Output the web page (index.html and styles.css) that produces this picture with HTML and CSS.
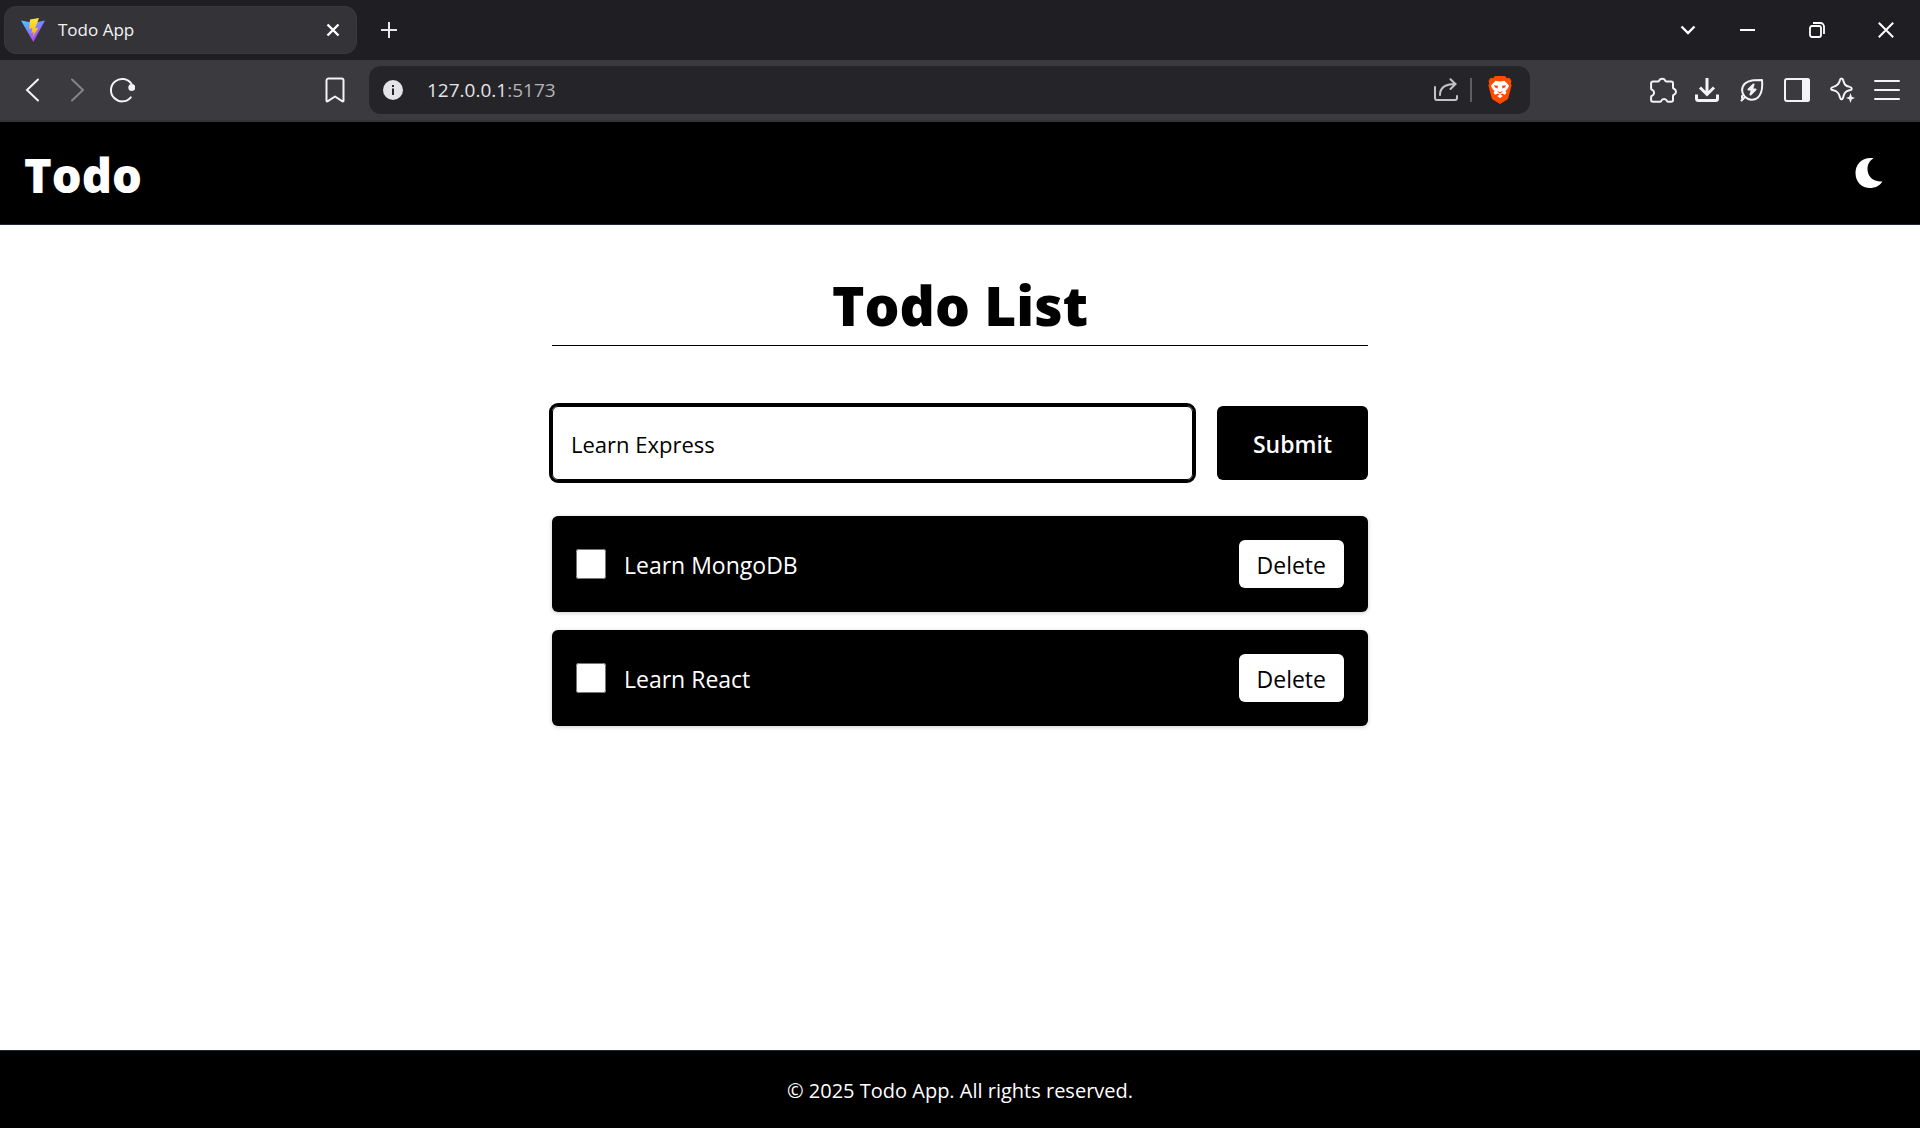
FILE: index.html
```html
<!DOCTYPE html>
<html lang="en">
<head>
<meta charset="utf-8">
<meta name="viewport" content="width=device-width, initial-scale=1">
<title>Todo App</title>
<link rel="stylesheet" href="styles.css">
</head>
<body>
<div class="browser">
  <div class="tab-strip">
    <div class="tab">
      <svg class="tab-logo" width="24" height="24" viewBox="0 0 24 24" aria-hidden="true">
        <defs>
          <linearGradient id="vite-a" x1="0" y1="0" x2="0.6" y2="1"><stop offset="0" stop-color="#41d1ff"/><stop offset="1" stop-color="#bd34fe"/></linearGradient>
          <linearGradient id="vite-b" x1="0" y1="0" x2="0" y2="1"><stop offset="0" stop-color="#ffea3d"/><stop offset="1" stop-color="#ffa800"/></linearGradient>
        </defs>
        <path d="M0 2.6 12.3 24 24 2.6 12.5 4.8Z" fill="url(#vite-a)"/>
        <path d="M18 0 9 1.400 8.200 10.800l3.100-.6-1 4.800 2.600-.7-1.600 5.600 6-10.100-3.200.5Z" fill="url(#vite-b)"/>
      </svg>
      <span class="tab-title">Todo App</span>
      <button class="tab-close" type="button" aria-label="Close tab">
        <svg width="14" height="14" viewBox="0 0 14 14" fill="none" stroke="#fff" stroke-width="2.4"><path d="M1.5 1.5l11 11M12.5 1.5l-11 11"/></svg>
      </button>
    </div>
    <button class="new-tab" type="button" aria-label="New tab">
      <svg width="16" height="16" viewBox="0 0 16 16" fill="none" stroke="#e8e8ea" stroke-width="2"><path d="M8 0v16M0 8h16"/></svg>
    </button>
    <div class="window-controls">
      <button type="button" aria-label="Search tabs"><svg width="16" height="10" viewBox="0 0 16 10" fill="none" stroke="#fff" stroke-width="2.4"><path d="M1.5 1.5 8 8l6.5-6.5"/></svg></button>
      <button type="button" aria-label="Minimize"><svg width="16" height="16" viewBox="0 0 16 16" fill="#fff"><path d="M0 7h15v2H0z"/></svg></button>
      <button type="button" aria-label="Restore"><svg width="16" height="16" viewBox="0 0 16 16" fill="none" stroke="#fff" stroke-width="1.8"><rect x="1" y="4" width="11" height="11" rx="2"/><path d="M4 1h7.500A3.500 3.500 0 0 1 15 4.500V12"/></svg></button>
      <button type="button" aria-label="Close window"><svg width="16" height="16" viewBox="0 0 16 16" fill="none" stroke="#fff" stroke-width="2"><path d="M.8.8l14.400 14.400M15.200.8.8 15.200"/></svg></button>
    </div>
  </div>

  <div class="toolbar">
    <button class="tool" type="button" aria-label="Back"><svg width="24" height="24" viewBox="0 0 24 24" fill="none" stroke="#f4f4f6" stroke-width="2" stroke-linecap="round"><path d="M18 1.500 7 12l11 10.500"/></svg></button>
    <button class="tool" type="button" aria-label="Forward"><svg width="24" height="24" viewBox="0 0 24 24" fill="none" stroke="#858489" stroke-width="2" stroke-linecap="round"><path d="M7 1.500 18 12 7 22.500"/></svg></button>
    <button class="tool" type="button" aria-label="Reload"><svg width="26" height="26" viewBox="0 0 26 26" fill="none" stroke="#f4f4f6" stroke-width="2" stroke-linecap="round"><path d="M21.800 20.300A11.200 11.200 0 1 1 22.500 7"/><circle cx="22.800" cy="10.600" r="2.500" fill="#f4f4f6"/></svg></button>
    <button class="tool bookmark" type="button" aria-label="Bookmark"><svg width="20" height="26" viewBox="0 0 20 26" fill="none" stroke="#f4f4f6" stroke-width="2" stroke-linejoin="round"><path d="M3.500 1.500h13a2 2 0 0 1 2 2v20q0 1.600-1.400.7L10 19.500l-7.100 4.700q-1.400.9-1.400-.7v-20a2 2 0 0 1 2-2Z"/></svg></button>
    <div class="address-bar">
      <svg width="20" height="20" viewBox="0 0 20 20" aria-hidden="true"><circle cx="10" cy="10" r="10" fill="#e4e3e8"/><path d="M9 5h2v2H9zM9 8.500h2V15H9z" fill="#252429"/></svg>
      <span class="address">127.0.0.1<span class="port">:5173</span></span>
      <button class="address-action" type="button" aria-label="Share"><svg width="24" height="24" viewBox="0 0 24 24" fill="none" stroke="#c4c3c8" stroke-width="2" stroke-linecap="round"><path d="M1 9v11a2 2 0 0 0 2 2h18a2 2 0 0 0 2-2v-2M6 17C6 10 10 6 21 6M16.500 1.200 21.500 6l-5 5"/></svg></button>
      <span class="address-divider"></span>
      <button class="address-action" type="button" aria-label="Brave Shields"><svg width="24" height="28" viewBox="0 0 24 28"><path d="M7 0h10l2 2.200 2.500-.4L23.500 5l-.7 2.200.8 2-3.100 12.300q-.5 1.500-2 2.600L12 28l-6.500-3.900q-1.500-1.100-2-2.600L.4 9.200l.8-2L.5 5l2-3.200 2.500.4Z" fill="#ff4b00"/><path d="M7.500 4.800 12 5.600l4.500-.8 4.500 4.600-.7 2-2.600 3.700.7 1.900-1.600 1.700-2.700-1.200-1.600 1 2.200 1.500L12 22.300 9.300 20l2.200-1.500-1.600-1-2.700 1.200L5.600 17l.7-1.900-2.600-3.700-.7-2Z" fill="#fff"/><path d="m6 9.200 4.200.6-.6 1 .4 1.800-3-1ZM18 9.200l-4.200.6.6 1-.4 1.800 3-1ZM9 14.600l2.300 1.300h1.400l2.300-1.300-1.800 2.400-1.200.6-1.200-.6Z" fill="#ff4b00"/></svg></button>
    </div>
    <div class="tools-right">
      <button class="tool" type="button" aria-label="Extensions"><svg width="30" height="26" viewBox="-4 0 30 26" fill="none" stroke="#f4f4f6" stroke-width="2" stroke-linejoin="round"><path d="M2 4.500h5q1 0 1.200-1a3.300 3 0 0 1 6 0q.2 1 1.200 1h4.700q1.900 0 1.900 1.900v4q0 1 .9 1.300a3.200 3.200 0 0 1 0 6q-.9.300-.9 1.300v4q0 1.800-1.900 1.800h-3q-1 0-1.200-1a3 3 0 0 0-5.600 0q-.2 1-1.200 1H2q-1.900 0-1.900-1.800v-3q0-1 .9-1.300a3.200 3.200 0 0 0 0-6q-.9-.3-.9-1.300V6.400Q.1 4.500 2 4.500Z"/></svg></button>
      <button class="tool" type="button" aria-label="Downloads"><svg width="24" height="24" viewBox="0 0 24 24" fill="none" stroke="#f4f4f6" stroke-width="3"><path d="M12 0v16M5 9.500l7 7 7-7M1.500 16.500v4q0 2 2 2h17q2 0 2-2v-4"/></svg></button>
      <button class="tool" type="button" aria-label="Energy saver"><svg width="24" height="24" viewBox="0 0 24 24" fill="none" stroke="#f4f4f6" stroke-width="2" stroke-linejoin="round" stroke-linecap="round"><path d="M22 2c.8 8-.3 14-4.300 17.700-3.700 3-9.700 2.600-12.900-1C1.500 15.500.8 9.500 5 5.500 9 2 14 2 22 2ZM5 19l-3.500 3.500M2 18v2M13.500 6.500l-5 5h7l-5 5M13.500 6.500 12 11.500l-1.500 5"/></svg></button>
      <button class="tool" type="button" aria-label="Side panel"><svg width="26" height="24" viewBox="0 0 26 24" fill="none" stroke="#f4f4f6" stroke-width="2"><rect x="1" y="1" width="24" height="22" rx="2"/><path d="M19 1h4q2 0 2 2v18q0 2-2 2h-4Z" fill="#f4f4f6"/></svg></button>
      <button class="tool" type="button" aria-label="Assistant"><svg width="26" height="26" viewBox="0 0 26 26" fill="none" stroke="#f4f4f6" stroke-width="2" stroke-linejoin="round"><path d="M12.500 1.500c1.200 0 1.500.8 1.700 1.800.9 4 2.100 5.600 6.400 6.600 2.900.7 2.900 2.800 0 3.400-4.300 1-5.500 2.700-6.400 7-.6 2.600-2.700 2.600-3.300 0-.9-4.300-2.300-6-6.500-7-3-.6-3-2.700 0-3.400 4.200-1 5.600-2.600 6.500-6.600.2-1 .4-1.800 1.600-1.800Z"/><path d="m21.500 16 1.300 3.700 3.200 1.300-3.200 1.300-1.300 3.700-1.300-3.700L17 21l3.200-1.300Z" fill="#f4f4f6" stroke="none"/></svg></button>
      <button class="tool" type="button" aria-label="Menu"><svg width="26" height="20" viewBox="0 0 26 20" fill="none" stroke="#f4f4f6" stroke-width="2" stroke-linecap="round"><path d="M1 1h24M1 10h24M1 19h24"/></svg></button>
    </div>
  </div>
</div>

<header class="site-header">
  <div class="brand">Todo</div>
  <button class="theme-toggle" type="button" aria-label="Toggle dark mode">
    <svg width="28" height="30" viewBox="0 0 28 30" fill="#fff"><path d="M18.500.2C6-1 .5 7 .5 15 .5 24 7 30 15 30c5 0 9.500-2 12.500-6.500C18 24 12.500 18.500 12.500 11c0-4.800 2.300-8.600 6-10.800Z"/></svg>
  </button>
</header>

<main class="content">
  <h1 class="title">Todo List</h1>
  <form class="todo-form">
    <input class="todo-input" type="text" value="Learn Express" aria-label="New todo">
    <button class="submit" type="submit">Submit</button>
  </form>
  <ul class="todo-list">
    <li class="todo">
      <input class="todo-check" type="checkbox" id="todo-1">
      <label class="todo-text" for="todo-1">Learn MongoDB</label>
      <button class="delete" type="button">Delete</button>
    </li>
    <li class="todo">
      <input class="todo-check" type="checkbox" id="todo-2">
      <label class="todo-text" for="todo-2">Learn React</label>
      <button class="delete" type="button">Delete</button>
    </li>
  </ul>
</main>

<footer class="site-footer">© 2025 Todo App. All rights reserved.</footer>
</body>
</html>
```
FILE: styles.css
```css
*, *::before, *::after {
  box-sizing: border-box;
}

body {
  margin: 0;
  min-height: 100vh;
  display: flex;
  flex-direction: column;
  background: #fff;
  color: #000;
  font-family: "Open Sans", "Noto Sans", sans-serif;
  font-size: 23px;
  line-height: 36px;
}

button {
  margin: 0;
  padding: 0;
  border: 0;
  background: none;
  color: inherit;
  font: inherit;
  cursor: pointer;
}

svg {
  display: block;
  flex: none;
}

/* Browser frame */
.tab-strip {
  display: flex;
  align-items: center;
  height: 60px;
  padding-left: 4px;
  background: #1f1e23;
}

.tab {
  display: flex;
  align-items: center;
  width: 353px;
  height: 48px;
  padding: 0 16px;
  border: 1px solid #39383c;
  border-radius: 12px;
  background: #343337;
}

.tab-title {
  flex: 1;
  margin-left: 13px;
  color: #f4f4f6;
  font-size: 17px;
  line-height: 24px;
}

.tab-close,
.new-tab {
  display: grid;
  place-items: center;
}

.new-tab {
  width: 64px;
  height: 48px;
}

.window-controls {
  display: flex;
  margin-left: auto;
}

.window-controls button {
  display: grid;
  place-items: center;
  width: 69px;
  height: 60px;
}

.window-controls button:first-child {
  width: 50px;
}

.toolbar {
  display: flex;
  align-items: center;
  height: 62px;
  padding: 0 11px 0 9px;
  background: #3b3a3e;
  border-bottom: 2px solid #333236;
}

.tool {
  display: grid;
  place-items: center;
  width: 45px;
  height: 48px;
}

.bookmark {
  margin-left: 168px;
}

.address-bar {
  display: flex;
  flex: 1;
  align-items: center;
  height: 48px;
  margin-left: 12px;
  padding: 0 18px 0 14px;
  border-radius: 12px;
  background: #252429;
}

.address {
  flex: 1;
  margin-left: 24px;
  color: #e4e3e8;
  font-size: 19px;
  line-height: 28px;
}

.port {
  color: #b4b3b8;
}

.address-divider {
  width: 2px;
  height: 24px;
  margin: 0 16px 0 12px;
  background: #5f5e63;
}

.tools-right {
  display: flex;
  margin-left: 109px;
}

/* Application */
.site-header {
  display: flex;
  align-items: center;
  justify-content: space-between;
  padding: 24px 37px 24px 24px;
  border-bottom: 1px solid #1e293b;
  background: #000;
  color: #fff;
}

.brand {
  padding-top: 4px;
  font-size: 47px;
  font-weight: 800;
  line-height: 50px;
}

.content {
  flex: 1;
  width: 100%;
  max-width: 864px;
  margin: 0 auto;
  padding: 50px 24px;
}

.title {
  margin: 0 0 60px;
  padding-bottom: 10px;
  border-bottom: 1px solid #000;
  font-size: 55px;
  font-weight: 800;
  line-height: 60px;
  text-align: center;
}

.todo-form {
  display: flex;
  gap: 24px;
}

.todo-input {
  flex: 1;
  min-width: 0;
  height: 74px;
  padding: 2px 18px 0;
  border: 1px solid #000;
  border-radius: 6px;
  outline: 3px solid #000;
  background: #fff;
  color: #000;
  font: inherit;
  font-size: 22px;
}

.submit {
  padding: 2px 36px 0;
  border-radius: 6px;
  background: #000;
  color: #fff;
  font-weight: 600;
}

.todo-list {
  display: flex;
  flex-direction: column;
  gap: 18px;
  margin: 36px 0 0;
  padding: 0;
  list-style: none;
}

.todo {
  display: flex;
  align-items: center;
  gap: 18px;
  padding: 24px;
  border-radius: 6px;
  background: #000;
  box-shadow: 0 1px 4px rgb(0 0 0 / 20%);
  color: #fff;
}

.todo-check {
  width: 30px;
  height: 30px;
  margin: 0;
}

.todo-text {
  flex: 1;
  padding-top: 2px;
}

.delete {
  padding: 7px 18px 5px;
  border-radius: 6px;
  background: #fff;
  color: #000;
}

.site-footer {
  padding: 25px 24px 22px;
  border-top: 1px solid #1e293b;
  background: #000;
  color: #fff;
  font-size: 20px;
  line-height: 30px;
  text-align: center;
}
```
